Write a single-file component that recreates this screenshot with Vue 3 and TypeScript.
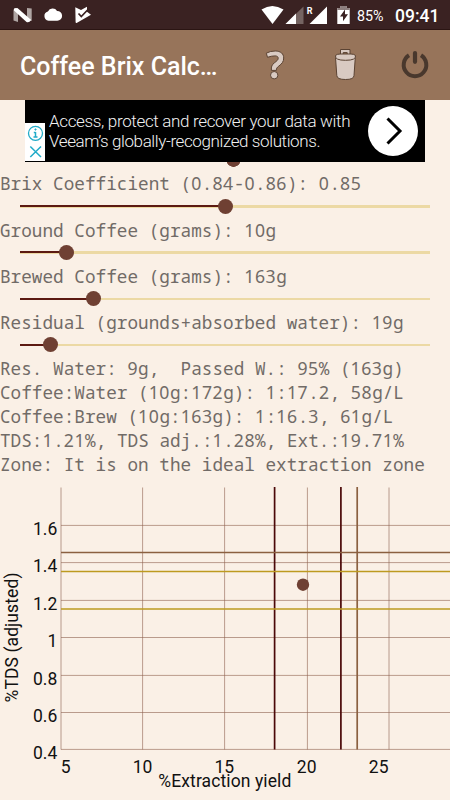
<script setup lang="ts">
interface Slider {
  label: string
  value: number
}

interface Segment {
  text: string
  numeric: boolean
}

const sliders: Slider[] = [
  { label: 'Brix Coefficient (0.84-0.86): 0.85', value: 50 },
  { label: 'Ground Coffee (grams): 10g', value: 11.4 },
  { label: 'Brewed Coffee (grams): 163g', value: 18 },
  { label: 'Residual (grounds+absorbed water): 19g', value: 7.5 },
]

const results: string[] = [
  'Res. Water: 9g,  Passed W.: 95% (163g)',
  'Coffee:Water (10g:172g): 1:17.2, 58g/L',
  'Coffee:Brew (10g:163g): 1:16.3, 61g/L',
  'TDS:1.21%, TDS adj.:1.28%, Ext.:19.71%',
  'Zone: It is on the ideal extraction zone',
]

// Digits are set in a face with an open zero.
function segments(line: string): Segment[] {
  return line
    .split(/(\d+)/)
    .filter((part) => part.length > 0)
    .map((text) => ({ text, numeric: /^\d/.test(text) }))
}

const gridX = [61, 142.6, 224.6, 307.4, 389]
const gridY = [38.4, 75.6, 113.4, 150.5, 188.4, 225.5, 262.4]
const yLabels = ['1.6', '1.4', '1.2', '1', '0.8', '0.6', '0.4']
const xLabels = [
  { text: '5', x: 65.7 },
  { text: '10', x: 142.5 },
  { text: '15', x: 224.3 },
  { text: '20', x: 306.7 },
  { text: '25', x: 378.7 },
]
</script>

<template>
  <div class="screen">
    <div class="status">
      <svg class="status-icons" width="100" height="30" viewBox="0 0 100 30">
        <path d="M13.5 9.5 18 8v14l-4.500-1.500zM27 8l4.700 .6v12.500L27 19z" fill="#afa5a3" />
        <path d="M14 8.500Q16 7.300 18 8.500L31.200 20Q29 23.300 26.500 22L14 10.500z" fill="#fff" />
        <path d="M48.500 20.700a4.700 4.700 0 0 1-.6-9.200 5.300 5.300 0 0 1 9.200-.6 4.900 4.900 0 0 1 .2 9.800z" fill="#fff" />
        <path d="M75.300 7.300 81 10l6-3.200v5l4 3L76.600 23q-1 .2-1-1z" fill="#fff" />
        <path d="M78.500 13.500 81.300 16.500 88 9.500" fill="none" stroke="#3a2222" stroke-width="1.700" />
      </svg>
      <svg class="status-icons" width="95" height="30" viewBox="0 0 95 30">
        <path d="M1.500 9.600Q12.300 2.500 23.500 9.600L12.500 24z" fill="#fff" />
        <path d="M43.500 6.500V24H25.500z" fill="#756462" />
        <path d="M36 13.500V24H25.500z" fill="#fff" />
        <path d="M67 6.500V24H49.500z" fill="#fff" />
        <text x="46.800" y="14" class="roaming">R</text>
        <path d="M77.300 8h3.200V6h6v2h3.200v16H77.300z" fill="#fff" />
        <path d="M77.300 8h3.200V6h6v2h3.200v2H77.300z" fill="#8d7f7e" />
        <path d="M85 9.500 80 16.500h3v4.700l5-7h-3z" fill="#3a2222" />
      </svg>
      <span class="battery">85%</span>
      <span class="clock">09:41</span>
    </div>

    <header class="appbar">
      <h1>Coffee Brix Calc…</h1>
      <svg class="actions" width="190" height="70" viewBox="0 0 190 70">
        <g fill="#d9cac2" stroke="#5b4333" stroke-width="1">
          <path d="M7.500 27.300 6.300 23.200Q10 21 15.200 21c5.400 0 8.500 2.700 8.500 7 0 3.700-1.800 5.700-4.800 8-2.200 1.700-2.500 2.400-2.500 4.400h-5c-.3-3.700.4-5.600 2.900-7.500 2.700-2.100 3.900-3 3.900-4.700 0-1.500-1.100-2.300-3.300-2.300-2.300 0-4.800.5-7.400 1.400z" />
          <circle cx="14.200" cy="45.200" r="3.700" />
          <path d="M75.500 27.300 76.800 45.500Q77 49.500 85.500 49.500T94 45.500L95.300 27.300z" />
          <path d="M80.500 25.500V19.500H90v6h-2.800V22.600h-4v2.900z" />
          <path d="M75.500 25.500Q77 24 80 24H91Q94 24 95.500 25.500 96.500 30.300 85.500 30.300T75.500 25.500z" />
        </g>
        <path d="M149 25.300A11.300 11.300 0 1 0 161 25.300" fill="none" stroke="#49382d" stroke-width="4" />
        <path d="M155 23V31.800" stroke="#49382d" stroke-width="4.200" stroke-linecap="round" />
      </svg>
    </header>

    <section class="ad">
      <div class="ad-marks">
        <svg width="20" height="38" viewBox="0 0 20 38" fill="none" stroke="#20abc8">
          <circle cx="10.500" cy="10.300" r="7" stroke-width="1.300" />
          <path d="M10.500 9v5M8.800 9.500H10.500M8.500 14h4" stroke-width="1.500" />
          <circle cx="10.500" cy="6.500" r=".7" fill="#20abc8" stroke-width=".8" />
          <path d="M5.300 23.500 16 34M16 23.500 5.300 34" stroke-width="1.500" />
        </svg>
      </div>
      <svg class="ad-copy" width="320" height="62" viewBox="0 0 320 62">
        <text x="4" y="26.500" textLength="301.500">Access, protect and recover your data with</text>
        <text x="4" y="46.500" textLength="271.500">Veeam’s globally-recognized solutions.</text>
      </svg>
      <div class="ad-go">
        <svg width="50" height="50" viewBox="0 0 50 50">
          <path d="M19.500 12.500 32 25 19.500 37.500" fill="none" stroke="#000" stroke-width="3" />
        </svg>
      </div>
    </section>

    <main>
      <div class="peek"><span></span></div>
      <div v-for="s in sliders" :key="s.label" class="control">
        <div class="mono">
          <span v-for="(g, i) in segments(s.label)" :key="i" :class="{ num: g.numeric }">{{ g.text }}</span>
        </div>
        <div class="track">
          <div class="fill" :style="{ width: s.value + '%' }"><span class="thumb"></span></div>
        </div>
      </div>
      <div class="results">
        <div v-for="r in results" :key="r" class="mono">
          <span v-for="(g, i) in segments(r)" :key="i" :class="{ num: g.numeric }">{{ g.text }}</span>
        </div>
      </div>
    </main>

    <svg class="chart" width="450" height="313" viewBox="0 0 450 313">
      <g stroke="#8d6250" stroke-opacity=".6" stroke-width="1">
        <path v-for="x in gridX" :key="'x' + x" :d="`M${x} .5V262.500`" />
        <path v-for="y in gridY" :key="'y' + y" :d="`M61 ${y}H450`" />
      </g>
      <g stroke-width="1.700">
        <path d="M274.600 0V262.500M340.900 0V262.500" stroke="#4b0808" />
        <path d="M357.200 0V262.500" stroke="#8b6040" />
        <path d="M61 65.500H450" stroke="#8b6040" />
        <path d="M61 84.500H450M61 122H450" stroke="#bd9a20" />
      </g>
      <circle cx="303" cy="97.700" r="6.200" fill="#6f4033" />
      <g class="tick" text-anchor="end">
        <text v-for="(label, i) in yLabels" :key="label" x="57.300" :y="gridY[i] + 9.200">{{ label }}</text>
      </g>
      <g class="tick" text-anchor="middle">
        <text v-for="t in xLabels" :key="t.text" :x="t.x" y="286.200">{{ t.text }}</text>
      </g>
      <text class="axis" x="158.300" y="300.300" textLength="133">%Extraction yield</text>
      <text class="axis" transform="translate(17.500 215.500) rotate(-90)" textLength="130">%TDS (adjusted)</text>
    </svg>
  </div>
</template>

<style>
body {
  margin: 0;
  background: #faf0e6;
}
</style>

<style scoped>
.screen {
  width: 450px;
  height: 800px;
  overflow: hidden;
  background: #faf0e6;
  font-family: Roboto, sans-serif;
  display: flex;
  flex-direction: column;
}
.status {
  box-sizing: border-box;
  height: 30px;
  flex: none;
  display: flex;
  align-items: center;
  background: #3a2222;
  border-bottom: 1px solid #2b1513;
  color: #fff;
}
.status-icons {
  flex: none;
}
.status-icons + .status-icons {
  margin-left: 160px;
}
.roaming {
  font: bold 9px Roboto, sans-serif;
  fill: #fff;
}
.battery {
  width: 38px;
  margin-left: 2px;
  font-size: 14.300px;
  line-height: 30px;
  padding-top: 2px;
}
.clock {
  font-size: 17.500px;
  font-weight: 500;
  line-height: 30px;
  padding-top: 2px;
}
.appbar {
  height: 70px;
  flex: none;
  display: flex;
  align-items: center;
  justify-content: space-between;
  padding-left: 20px;
  background: #97745a;
}
h1 {
  margin: 4px 0 0;
  color: #fff;
  font-size: 25px;
  font-weight: 500;
  line-height: 30px;
  white-space: nowrap;
}
.actions {
  flex: none;
}
.ad {
  width: 400px;
  height: 62px;
  flex: none;
  align-self: center;
  display: flex;
  background: #000;
}
.ad-marks {
  width: 20px;
  height: 38px;
  align-self: flex-end;
  margin-bottom: 1px;
  background: #fff;
  flex: none;
}
.ad-marks svg,
.ad-go svg,
.ad-copy {
  display: block;
  flex: none;
}
.ad-copy text {
  font: 300 17px Roboto, sans-serif;
  fill: #f2f2f2;
}
.ad-go {
  width: 50px;
  height: 50px;
  margin: 6px 0 0 3px;
  border-radius: 50%;
  background: #fff;
  flex: none;
}
main {
  height: 325px;
  flex: none;
}
.peek {
  height: 10.400px;
  display: flex;
  justify-content: center;
  align-items: flex-start;
}
.peek span {
  width: 15px;
  height: 5px;
  margin-left: 16px;
  background: radial-gradient(circle at 7.500px -2.500px, #6f4033 7px, transparent 7.600px);
}
.control {
  height: 46.250px;
}
.mono {
  height: 23.800px;
  line-height: 23.800px;
  font-family: "Droid Sans Mono", "Noto Sans Mono", "DejaVu Sans Mono", monospace;
  font-size: 17.650px;
  letter-spacing: 0.035px;
  color: #716b67;
  white-space: pre;
}
.num {
  font-family: "Noto Sans", sans-serif;
  letter-spacing: 0.565px;
}
.track {
  height: 2.500px;
  margin: 9px 20px 0;
  background: #ecd9a4;
}
.fill {
  height: 2px;
  display: flex;
  justify-content: flex-end;
  align-items: center;
  background: #5c1a12;
}
.thumb {
  width: 15px;
  height: 15px;
  margin-right: -7.500px;
  border-radius: 50%;
  background: #6f4033;
  flex: none;
}
.results {
  padding-top: 0;
}
.chart {
  display: block;
  flex: none;
}
.tick {
  font: 17.500px Roboto, sans-serif;
  fill: #111;
}
.axis {
  font: 17.500px Roboto, sans-serif;
  fill: #111;
}
</style>
